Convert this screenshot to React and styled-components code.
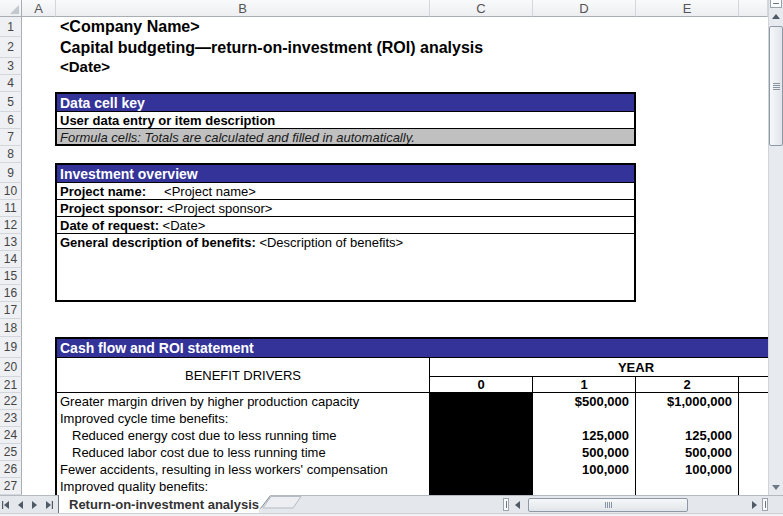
import React from 'react';
import styled, { createGlobalStyle } from 'styled-components';

const GlobalStyle = createGlobalStyle`
  html, body {
    margin: 0;
    padding: 0;
    background: #fff;
    overflow: hidden;
  }
  body {
    font-family: "Liberation Sans", Arial, sans-serif;
    color: #000;
  }
  * {
    box-sizing: border-box;
  }
`;

const COLUMNS = '22px 34px 374px 103px 103px 103px 1fr';
const ROW_HEIGHTS = [20, 21, 17, 17, 20, 17, 17, 17, 20, 17, 17, 17, 17, 17, 17, 17, 17, 18, 21, 19, 16, 17, 17, 17, 17, 17, 17];

const drivers = [
  { label: 'Greater margin driven by higher production capacity', y1: '$500,000', y2: '$1,000,000' },
  { label: 'Improved cycle time benefits:' },
  { label: 'Reduced energy cost due to less running time', indent: true, y1: '125,000', y2: '125,000' },
  { label: 'Reduced labor cost due to less running time', indent: true, y1: '500,000', y2: '500,000' },
  { label: "Fewer accidents, resulting in less workers' compensation", y1: '100,000', y2: '100,000' },
  { label: 'Improved quality benefits:' },
];

const Window = styled.div`
  width: 783px;
  height: 516px;
  display: flex;
  flex-direction: column;
  overflow: hidden;
  background: #fff;
`;

const Workspace = styled.div`
  display: flex;
  height: 495px;
`;

const Sheet = styled.div`
  width: 768px;
  display: flex;
  flex-direction: column;
  overflow: hidden;
`;

const HeaderRow = styled.div`
  display: grid;
  grid-template-columns: ${COLUMNS};
  height: 17px;
  flex-shrink: 0;
`;

const ColumnHeader = styled.div`
  display: flex;
  align-items: center;
  justify-content: center;
  background: linear-gradient(#f9fafb, #eceef1);
  border-right: 1px solid #d3d7dc;
  border-bottom: 1px solid #a9aeb5;
  font-size: 13px;
  color: #555;
`;

const Corner = styled(ColumnHeader)`
  justify-content: flex-end;
  align-items: flex-end;
  padding: 0 2px 2px 0;
  border-right-color: #a9aeb5;
`;

const Cells = styled.div`
  display: grid;
  grid-template-columns: ${COLUMNS};
  grid-template-rows: ${ROW_HEIGHTS.map((h) => `${h}px`).join(' ')};
`;

const RowNumber = styled.div`
  grid-column: 1;
  grid-row: ${(p) => p.$row};
  display: flex;
  align-items: center;
  justify-content: center;
  background: #eef0f3;
  border-right: 1px solid #a9aeb5;
  border-bottom: 1px solid #d3d7dc;
  font-size: 12px;
  color: #444;
`;

const Title = styled.div`
  grid-column: 3 / span 4;
  grid-row: ${(p) => p.$row};
  display: flex;
  align-items: center;
  padding-left: 4px;
  font-size: ${(p) => p.$size}px;
  font-weight: bold;
  white-space: nowrap;
`;

const Box = styled.div`
  grid-column: 3 / ${(p) => p.$end};
  grid-row: ${(p) => p.$rows};
  margin-left: -1px;
  display: flex;
  flex-direction: column;
  border: 2px solid #000;
  ${(p) => p.$open && 'border-right: none; border-bottom: none;'}
  overflow: hidden;
`;

const Band = styled.div`
  flex: 0 0 ${(p) => p.$height || 18}px;
  display: flex;
  align-items: center;
  padding-left: 3px;
  background: #333399;
  border-bottom: 1px solid #000;
  color: #fff;
  font-size: 14px;
  font-weight: bold;
  white-space: nowrap;
`;

const Line = styled.div`
  flex: ${(p) => (p.$fill ? '1 1 auto' : '0 0 17px')};
  display: flex;
  align-items: ${(p) => (p.$fill ? 'flex-start' : 'center')};
  padding: ${(p) => (p.$fill ? '1px 0 0 3px' : '0 0 0 3px')};
  border-bottom: ${(p) => (p.$last ? 'none' : '1px solid #000')};
  background: ${(p) => (p.$shaded ? '#c0c0c0' : '#fff')};
  color: ${(p) => (p.$shaded ? '#1a1a1a' : '#000')};
  font-size: 13px;
  font-style: ${(p) => (p.$italic ? 'italic' : 'normal')};
  font-weight: ${(p) => (p.$bold ? 'bold' : 'normal')};
  white-space: pre;
`;

const Label = styled.span`
  font-weight: bold;
`;

const FlowGrid = styled.div`
  display: grid;
  grid-template-columns: 373px repeat(4, 103px);
  grid-template-rows: 19px 19px 16px repeat(6, 17px);
  width: max-content;
  font-size: 13px;
`;

const FlowBand = styled(Band)`
  grid-column: 1 / -1;
  grid-row: 1;
`;

const DriversHead = styled.div`
  grid-column: 1;
  grid-row: 2 / span 2;
  display: flex;
  align-items: center;
  justify-content: center;
  border-right: 1px solid #000;
  border-bottom: 1px solid #000;
`;

const YearHead = styled.div`
  grid-column: 2 / span 4;
  grid-row: 2;
  display: flex;
  align-items: center;
  justify-content: center;
  border-bottom: 1px solid #000;
  font-weight: bold;
`;

const YearCell = styled.div`
  display: flex;
  align-items: center;
  justify-content: center;
  border-right: 1px solid #000;
  border-bottom: 1px solid #000;
  font-weight: bold;
`;

const DriverCell = styled.div`
  display: flex;
  align-items: center;
  padding-left: ${(p) => (p.$indent ? 15 : 3)}px;
  border-right: 1px solid #000;
  white-space: nowrap;
`;

const BlankYear = styled.div`
  background: #000;
  border-right: 1px solid #000;
`;

const Amount = styled.div`
  display: flex;
  align-items: center;
  justify-content: flex-end;
  padding-right: 6px;
  border-right: 1px solid #000;
  font-weight: bold;
`;

const VScroll = styled.div`
  width: 15px;
  display: flex;
  flex-direction: column;
  background: #e7eaee;
  border-left: 1px solid #cfd4da;
`;

const SplitGrip = styled.div`
  height: 8px;
  margin: 0 1px;
  display: flex;
  align-items: center;
  justify-content: center;
  border: 1px solid #9aa3ae;
  border-top: none;
  background: #fbfcfd;

  &::after {
    content: '';
    width: 6px;
    height: 1px;
    background: #6c7682;
  }
`;

const ArrowButton = styled.div`
  flex: 0 0 ${(p) => p.$size || 16}px;
  display: flex;
  align-items: center;
  justify-content: center;
`;

const VThumb = styled.div`
  height: 120px;
  margin: 2px 0 0;
  display: flex;
  align-items: center;
  justify-content: center;
  border: 1px solid #8f99a5;
  border-radius: 2px;
  background: linear-gradient(90deg, #f6f8fa, #e1e5ea);
`;

const Grip = styled.div`
  display: flex;
  flex-direction: ${(p) => (p.$vertical ? 'row' : 'column')};
  gap: 1px;

  & > span {
    display: block;
    background: #8a94a0;
    ${(p) => (p.$vertical ? 'width: 1px; height: 6px;' : 'width: 7px; height: 1px;')}
  }
`;

const Spacer = styled.div`
  flex: 1;
`;

const BottomBar = styled.div`
  height: 21px;
  display: flex;
  flex-direction: column;
`;

const TabStrip = styled.div`
  height: 18px;
  display: flex;
  background: #e4e7ec;
  border-top: 1px solid #b5bac1;
`;

const StatusEdge = styled.div`
  flex: 1;
  background: #f1f2f4;
  border-top: 1px solid #cdd1d6;
`;

const Nav = styled.div`
  width: 58px;
  display: flex;
  align-items: center;
  justify-content: space-between;
  padding: 0 5px 0 2px;
`;

const SheetTab = styled.div`
  margin-top: -1px;
  display: flex;
  align-items: center;
  padding: 0 0 0 10px;
  background: #fff;
  border-left: 1px solid #6b7480;
  font-size: 13px;
  font-weight: bold;
  color: #333;
  white-space: nowrap;
`;

const HScroll = styled.div`
  width: 268px;
  display: flex;
  align-items: center;
  padding-left: 3px;
`;

const SplitTick = styled.div`
  width: 6px;
  height: 13px;
  border: 1px solid #9aa3ae;
  background: #fbfcfd;
  display: flex;
  align-items: center;
  justify-content: center;

  &::after {
    content: '';
    width: 1px;
    height: 7px;
    background: #6c7682;
  }
`;

const HTrack = styled.div`
  flex: 1;
  height: 100%;
  display: flex;
  align-items: center;
  padding-left: 3px;
`;

const HThumb = styled.div`
  width: 160px;
  height: 14px;
  display: flex;
  align-items: center;
  justify-content: center;
  border: 1px solid #8f99a5;
  border-radius: 2px;
  background: linear-gradient(#f6f8fa, #e1e5ea);
`;

const ScrollCorner = styled.div`
  width: 15px;
  background: #e4e7ec;
`;

const Triangle = ({ dir, color = '#4f5a66' }) => {
  const points = {
    up: '0,5 4,0 8,5',
    down: '0,0 8,0 4,5',
    left: '5,0 5,8 0,4',
    right: '0,0 0,8 5,4',
  }[dir];
  const vertical = dir === 'up' || dir === 'down';
  return (
    <svg width={vertical ? 8 : 5} height={vertical ? 5 : 8} viewBox={vertical ? '0 0 8 5' : '0 0 5 8'}>
      <polygon points={points} fill={color} />
    </svg>
  );
};

const EndArrow = ({ dir }) => (
  <svg width="7" height="8" viewBox="0 0 7 8">
    {dir === 'left' ? (
      <>
        <rect x="0" y="0" width="1.2" height="8" fill="#4f5a66" />
        <polygon points="7,0 7,8 2,4" fill="#4f5a66" />
      </>
    ) : (
      <>
        <polygon points="0,0 0,8 5,4" fill="#4f5a66" />
        <rect x="5.8" y="0" width="1.2" height="8" fill="#4f5a66" />
      </>
    )}
  </svg>
);

const TabEdge = () => (
  <svg width="44" height="18" viewBox="0 0 44 18" style={{ marginTop: -1 }}>
    <polygon points="0,0 12,0 2,13 0,13" fill="#fff" />
    <line x1="1.5" y1="13.5" x2="11.5" y2="0.5" stroke="#7e8791" />
    <polygon points="12,1.5 42,1.5 34,13 4,13" fill="#eceef2" stroke="#b6bcc4" />
  </svg>
);

const App = () => (
  <>
    <GlobalStyle />
    <Window>
      <Workspace>
        <Sheet>
          <HeaderRow>
            <Corner>
              <svg width="9" height="9" viewBox="0 0 9 9">
                <polygon points="9,0 9,9 0,9" fill="#c3c8ce" />
              </svg>
            </Corner>
            {['A', 'B', 'C', 'D', 'E', ''].map((c, i) => (
              <ColumnHeader key={i}>{c}</ColumnHeader>
            ))}
          </HeaderRow>

          <Cells>
            {ROW_HEIGHTS.map((_, i) => (
              <RowNumber key={i} $row={i + 1}>
                {i + 1}
              </RowNumber>
            ))}

            <Title $row={1} $size={16}>&lt;Company Name&gt;</Title>
            <Title $row={2} $size={16}>Capital budgeting—return-on-investment (ROI) analysis</Title>
            <Title $row={3} $size={15}>&lt;Date&gt;</Title>

            <Box $end={6} $rows="5 / span 3">
              <Band>Data cell key</Band>
              <Line $bold>User data entry or item description</Line>
              <Line $shaded $italic $last $fill>
                Formula cells: Totals are calculated and filled in automatically.
              </Line>
            </Box>

            <Box $end={6} $rows="9 / span 8">
              <Band>Investment overview</Band>
              <Line>
                <Label>Project name:     </Label>&lt;Project name&gt;
              </Line>
              <Line>
                <Label>Project sponsor: </Label>&lt;Project sponsor&gt;
              </Line>
              <Line>
                <Label>Date of request: </Label>&lt;Date&gt;
              </Line>
              <Line $fill $last>
                <Label>General description of benefits: </Label>&lt;Description of benefits&gt;
              </Line>
            </Box>

            <Box $end={-1} $rows="19 / span 9" $open>
              <FlowGrid>
                <FlowBand>Cash flow and ROI statement</FlowBand>
                <DriversHead>BENEFIT DRIVERS</DriversHead>
                <YearHead>YEAR</YearHead>
                {['0', '1', '2', ''].map((y, i) => (
                  <YearCell key={i}>{y}</YearCell>
                ))}
                {drivers.map((d, i) => (
                  <React.Fragment key={i}>
                    <DriverCell $indent={d.indent}>{d.label}</DriverCell>
                    <BlankYear />
                    <Amount>{d.y1}</Amount>
                    <Amount>{d.y2}</Amount>
                    <Amount />
                  </React.Fragment>
                ))}
              </FlowGrid>
            </Box>
          </Cells>
        </Sheet>

        <VScroll>
          <SplitGrip />
          <ArrowButton>
            <Triangle dir="up" />
          </ArrowButton>
          <VThumb>
            <Grip>
              <span />
              <span />
              <span />
              <span />
            </Grip>
          </VThumb>
          <Spacer />
          <ArrowButton>
            <Triangle dir="down" color="#6f7985" />
          </ArrowButton>
        </VScroll>
      </Workspace>

      <BottomBar>
        <TabStrip>
          <Nav>
            <EndArrow dir="left" />
            <Triangle dir="left" />
            <Triangle dir="right" />
            <EndArrow dir="right" />
          </Nav>
          <SheetTab>Return-on-investment analysis</SheetTab>
          <TabEdge />
          <Spacer />
          <HScroll>
            <SplitTick />
            <ArrowButton $size={16}>
              <Triangle dir="left" />
            </ArrowButton>
            <HTrack>
              <HThumb>
                <Grip $vertical>
                  <span />
                  <span />
                  <span />
                  <span />
                </Grip>
              </HThumb>
            </HTrack>
            <ArrowButton $size={16}>
              <Triangle dir="right" />
            </ArrowButton>
            <SplitTick />
          </HScroll>
          <ScrollCorner />
        </TabStrip>
        <StatusEdge />
      </BottomBar>
    </Window>
  </>
);

export default App;
